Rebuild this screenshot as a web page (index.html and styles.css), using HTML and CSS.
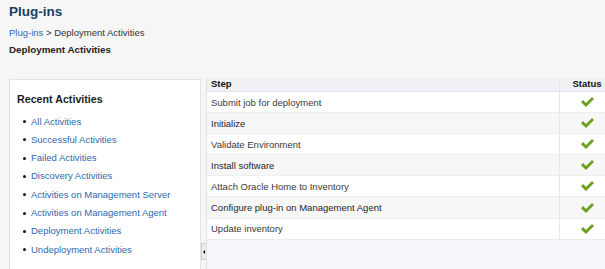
FILE: index.html
```html
<!DOCTYPE html>
<html>
<head>
<meta charset="utf-8">
<link rel="stylesheet" href="styles.css">
</head>
<body>
<header class="page-head">
  <h1 class="title">Plug-ins</h1>
  <div class="crumbs"><a href="#" class="link">Plug-ins</a> &gt; Deployment Activities</div>
  <h2 class="subtitle">Deployment Activities</h2>
</header>
<main class="main">
  <aside class="panel">
    <h3 class="panel-title">Recent Activities</h3>
    <ul class="act-list">
      <li><a href="#" class="link">All Activities</a></li>
      <li><a href="#" class="link">Successful Activities</a></li>
      <li><a href="#" class="link">Failed Activities</a></li>
      <li><a href="#" class="link">Discovery Activities</a></li>
      <li><a href="#" class="link">Activities on Management Server</a></li>
      <li><a href="#" class="link">Activities on Management Agent</a></li>
      <li><a href="#" class="link">Deployment Activities</a></li>
      <li><a href="#" class="link">Undeployment Activities</a></li>
    </ul>
  </aside>
  <div class="splitter">
    <div class="handle"><span class="arrow"></span></div>
  </div>
  <section class="grid">
    <div class="row head">
      <div class="c-step">Step</div>
      <div class="c-status">Status</div>
    </div>
    <div class="row"><div class="c-step">Submit job for deployment</div><div class="c-status"><svg class="check" viewBox="0 0 13 10"><polygon points="0,5.2 2.1,3.1 5,6 11,0 13,2.1 5,10"/></svg></div></div>
    <div class="row alt"><div class="c-step">Initialize</div><div class="c-status"><svg class="check" viewBox="0 0 13 10"><polygon points="0,5.2 2.1,3.1 5,6 11,0 13,2.1 5,10"/></svg></div></div>
    <div class="row"><div class="c-step">Validate Environment</div><div class="c-status"><svg class="check" viewBox="0 0 13 10"><polygon points="0,5.2 2.1,3.1 5,6 11,0 13,2.1 5,10"/></svg></div></div>
    <div class="row alt"><div class="c-step">Install software</div><div class="c-status"><svg class="check" viewBox="0 0 13 10"><polygon points="0,5.2 2.1,3.1 5,6 11,0 13,2.1 5,10"/></svg></div></div>
    <div class="row"><div class="c-step">Attach Oracle Home to Inventory</div><div class="c-status"><svg class="check" viewBox="0 0 13 10"><polygon points="0,5.2 2.1,3.1 5,6 11,0 13,2.1 5,10"/></svg></div></div>
    <div class="row alt"><div class="c-step">Configure plug-in on Management Agent</div><div class="c-status"><svg class="check" viewBox="0 0 13 10"><polygon points="0,5.2 2.1,3.1 5,6 11,0 13,2.1 5,10"/></svg></div></div>
    <div class="row"><div class="c-step">Update inventory</div><div class="c-status"><svg class="check" viewBox="0 0 13 10"><polygon points="0,5.2 2.1,3.1 5,6 11,0 13,2.1 5,10"/></svg></div></div>
  </section>
</main>
</body>
</html>
```

FILE: styles.css
```css
html, body {
  margin: 0;
  padding: 0;
  height: 100%;
  overflow: hidden;
}
body {
  background: #f6f6f6;
  font-family: "Liberation Sans", Arial, sans-serif;
  color: #333;
}
.page-head {
  padding: 4px 9px 0 9px;
  height: 74px;
  box-sizing: border-box;
}
.title {
  margin: 0;
  font-size: 13.5px;
  line-height: 16px;
  font-weight: bold;
  color: #163f62;
}
.crumbs {
  margin-top: 7.4px;
  font-size: 9.5px;
  line-height: 12px;
  color: #333;
}
.link {
  color: #2f69ad;
  text-decoration: none;
}
.subtitle {
  margin: 4.5px 0 0 0;
  font-size: 9.8px;
  line-height: 12px;
  font-weight: bold;
  color: #222;
}
.main {
  display: flex;
  margin-top: 4px;
  height: 191px;
}
.panel {
  margin-left: 9px;
  margin-top: 1px;
  width: 192px;
  box-sizing: border-box;
  background: #fff;
  border: 1px solid #e1e4e8;
  border-bottom: none;
  padding: 12.5px 7px 0 7px;
}
.panel-title {
  margin: 0;
  font-size: 10.7px;
  line-height: 13px;
  font-weight: bold;
  color: #1c1c1c;
}
.act-list {
  list-style: none;
  margin: 7px 0 0 0;
  padding: 0 0 0 6px;
}
.act-list li {
  display: flex;
  align-items: center;
  font-size: 9.5px;
  line-height: 18.3px;
  height: 18.3px;
}
.act-list li::before {
  content: "";
  width: 3px;
  height: 3px;
  border-radius: 50%;
  background: #111;
  margin-right: 5px;
}
.splitter {
  width: 5px;
  display: flex;
  flex-direction: column;
  justify-content: flex-end;
  padding-bottom: 9px;
  box-sizing: border-box;
}
.handle {
  width: 5px;
  height: 17px;
  box-sizing: border-box;
  background: #ececec;
  border: 1px solid #cfcfcf;
  border-right: none;
  display: flex;
  align-items: center;
  justify-content: center;
}
.arrow {
  width: 0;
  height: 0;
  border-top: 2px solid transparent;
  border-bottom: 2px solid transparent;
  border-right: 2px solid #000;
}
.grid {
  flex: 1;
  background: #f4f6fa;
  border-left: 1px solid #dde1e6;
}
.row {
  display: flex;
  height: 21.1px;
  box-sizing: border-box;
  border-bottom: 1px solid #ebedf0;
  background: #fff;
  font-size: 9.5px;
  color: #3a3a3a;
}
.row.alt {
  background: #f7f7f7;
  color: #1e1e1e;
}
.row.head {
  height: 14px;
  background: #eff1f4;
  border-bottom: 1px solid #e0e4e9;
  font-weight: bold;
  color: #111;
  align-items: flex-start;
}
.c-step {
  flex: 1;
  padding-left: 4px;
  display: flex;
  align-items: center;
  line-height: 11px;
}
.c-status {
  width: 46px;
  box-sizing: border-box;
  border-left: 1px solid #e6e8eb;
  padding-left: 9px;
  display: flex;
  align-items: center;
  justify-content: center;
  line-height: 11px;
}
.row.head .c-step,
.row.head .c-status {
  align-items: flex-start;
  height: 13px;
}
.check {
  width: 13px;
  height: 10px;
  fill: #69a11f;
  display: block;
}
```
